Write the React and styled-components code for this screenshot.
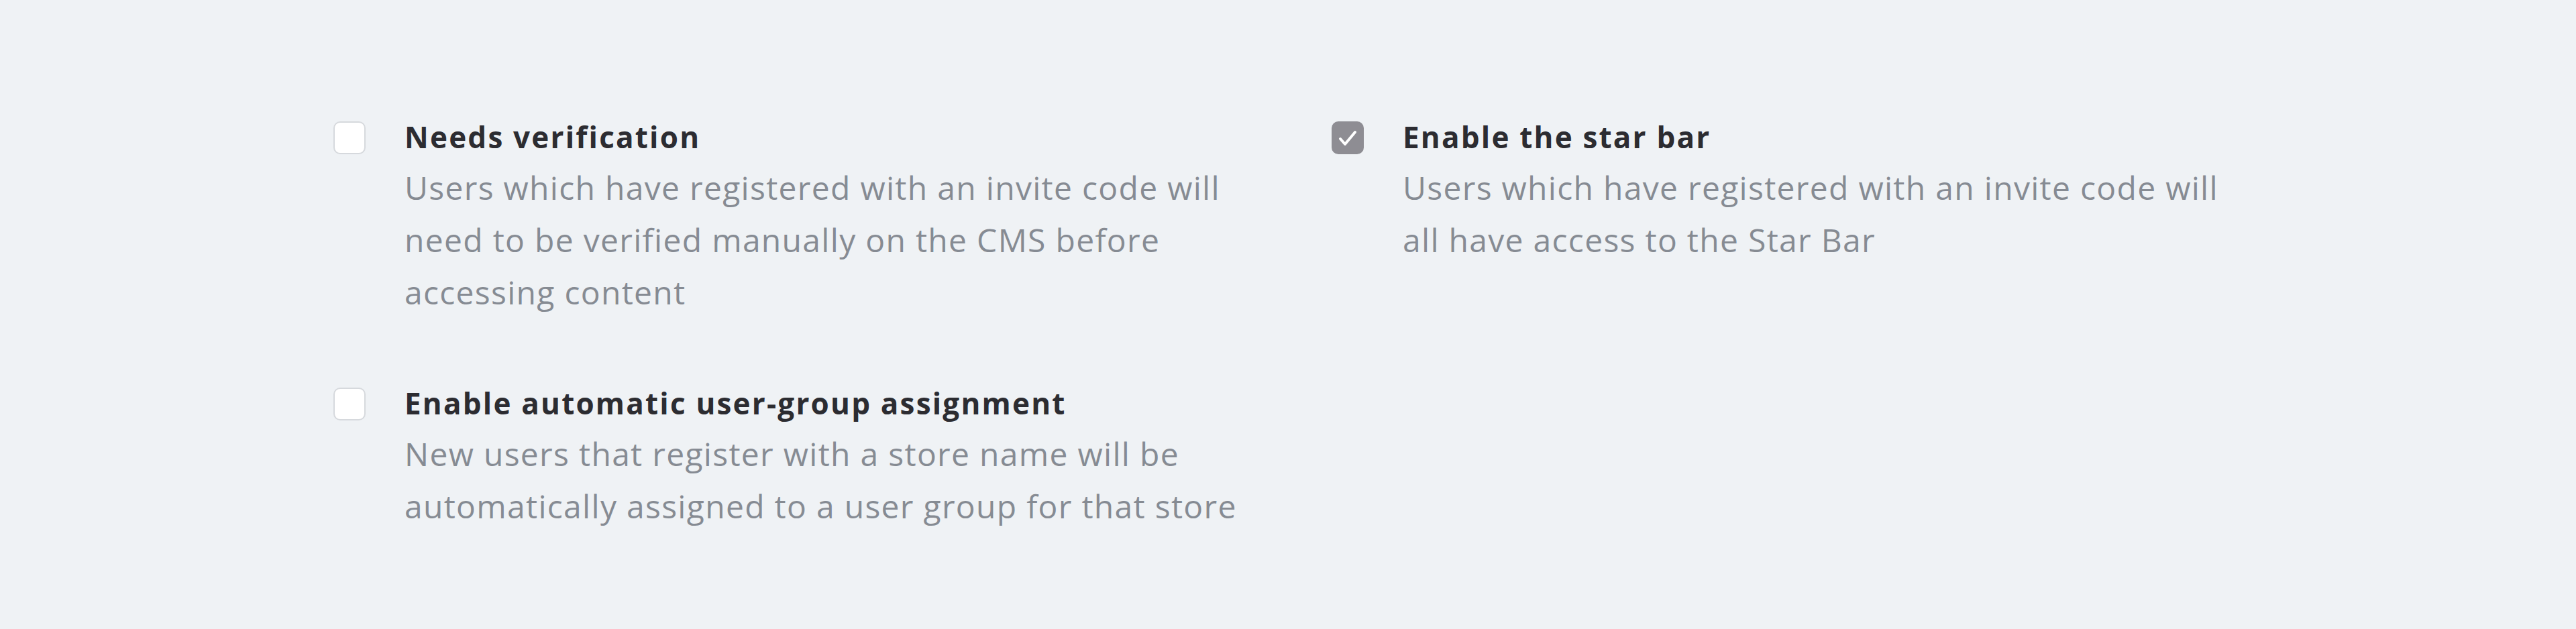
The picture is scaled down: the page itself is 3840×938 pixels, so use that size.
import React from 'react'
import styled, { createGlobalStyle } from 'styled-components'

const GlobalStyle = createGlobalStyle`
  html, body {
    margin: 0;
    padding: 0;
    background: #eff2f5;
  }
  body {
    font-family: 'Open Sans', 'Liberation Sans', sans-serif;
  }
`

const Page = styled.div`
  min-height: 938px;
  box-sizing: border-box;
  padding: 167px 0 0 497px;
  background: #eff2f5;
`

const Grid = styled.div`
  display: grid;
  grid-template-columns: 1488px 1488px;
  row-gap: 89px;
`

const Option = styled.label`
  display: flex;
  align-items: flex-start;
  gap: 58px;
  cursor: pointer;
`

const Box = styled.span`
  flex: none;
  width: 48px;
  height: 49px;
  margin-top: 14px;
  box-sizing: border-box;
  border-radius: 10px;
  display: flex;
  align-items: center;
  justify-content: center;
  background: ${p => (p.checked ? '#8e8d93' : '#ffffff')};
  border: 2px solid ${p => (p.checked ? '#8e8d93' : '#d6d9dd')};
`

const Text = styled.div`
  width: 1270px;
`

const Title = styled.div`
  font-size: 44px;
  line-height: 74px;
  font-weight: 700;
  letter-spacing: 2.2px;
  color: #2c2c31;
`

const Desc = styled.div`
  font-size: 48px;
  line-height: 78px;
  letter-spacing: 1.3px;
  color: #868b93;
`

const Tick = () => (
  <svg width="30" height="26" viewBox="0 0 30 26" fill="none">
    <path d="M4 14 L11 22 L26 4" stroke="#fff" strokeWidth="4" strokeLinecap="round" strokeLinejoin="round" />
  </svg>
)

const Check = ({ checked, title, desc }) => (
  <Option>
    <Box checked={checked}>{checked && <Tick />}</Box>
    <Text>
      <Title>{title}</Title>
      <Desc>{desc}</Desc>
    </Text>
  </Option>
)

const App = () => (
  <Page>
    <GlobalStyle />
    <Grid>
      <Check
        title="Needs verification"
        desc="Users which have registered with an invite code will need to be verified manually on the CMS before accessing content"
      />
      <Check
        checked
        title="Enable the star bar"
        desc="Users which have registered with an invite code will all have access to the Star Bar"
      />
      <Check
        title="Enable automatic user-group assignment"
        desc="New users that register with a store name will be automatically assigned to a user group for that store"
      />
    </Grid>
  </Page>
)

export default App
